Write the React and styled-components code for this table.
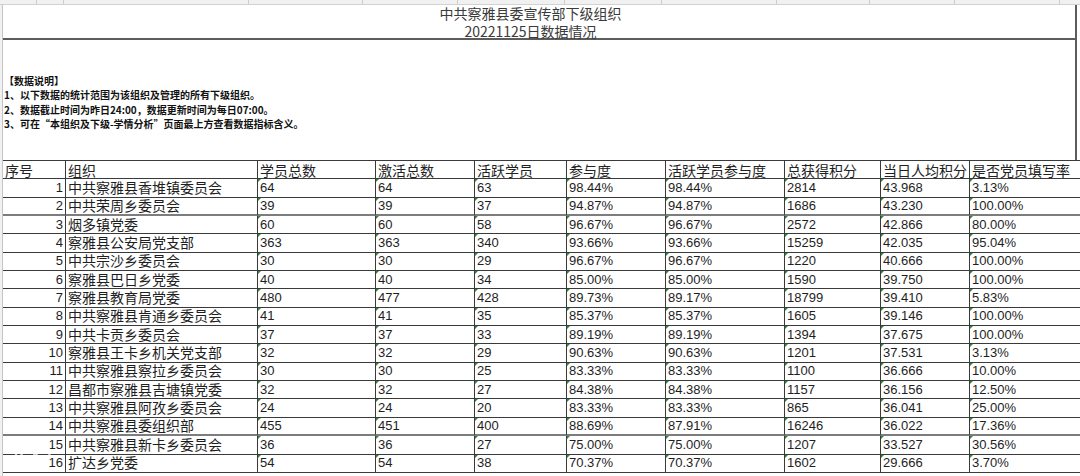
import React from "react";
import styled, { createGlobalStyle } from "styled-components";

const Global = createGlobalStyle`
  html, body { margin: 0; padding: 0; background: #fff; }
  body { font-family: "Liberation Sans", "Noto Sans CJK SC", sans-serif; }
`;

const COLS = [63, 192, 118, 99, 92, 99, 119, 96, 89, 130];
const STRIP = [37, 27, 185, 114, 95, 107, 97, 115, 93, 85, 105, 120];

const headers = ["序号", "组织", "学员总数", "激活总数", "活跃学员", "参与度", "活跃学员参与度", "总获得积分", "当日人均积分", "是否党员填写率"];

const rows = [
  ["中共察雅县香堆镇委员会", "64", "64", "63", "98.44%", "98.44%", "2814", "43.968", "3.13%"],
  ["中共荣周乡委员会", "39", "39", "37", "94.87%", "94.87%", "1686", "43.230", "100.00%"],
  ["烟多镇党委", "60", "60", "58", "96.67%", "96.67%", "2572", "42.866", "80.00%"],
  ["察雅县公安局党支部", "363", "363", "340", "93.66%", "93.66%", "15259", "42.035", "95.04%"],
  ["中共宗沙乡委员会", "30", "30", "29", "96.67%", "96.67%", "1220", "40.666", "100.00%"],
  ["察雅县巴日乡党委", "40", "40", "34", "85.00%", "85.00%", "1590", "39.750", "100.00%"],
  ["察雅县教育局党委", "480", "477", "428", "89.73%", "89.17%", "18799", "39.410", "5.83%"],
  ["中共察雅县肯通乡委员会", "41", "41", "35", "85.37%", "85.37%", "1605", "39.146", "100.00%"],
  ["中共卡贡乡委员会", "37", "37", "33", "89.19%", "89.19%", "1394", "37.675", "100.00%"],
  ["察雅县王卡乡机关党支部", "32", "32", "29", "90.63%", "90.63%", "1201", "37.531", "3.13%"],
  ["中共察雅县察拉乡委员会", "30", "30", "25", "83.33%", "83.33%", "1100", "36.666", "10.00%"],
  ["昌都市察雅县吉塘镇党委", "32", "32", "27", "84.38%", "84.38%", "1157", "36.156", "12.50%"],
  ["中共察雅县阿孜乡委员会", "24", "24", "20", "83.33%", "83.33%", "865", "36.041", "25.00%"],
  ["中共察雅县委组织部", "455", "451", "400", "88.69%", "87.91%", "16246", "36.022", "17.36%"],
  ["中共察雅县新卡乡委员会", "36", "36", "27", "75.00%", "75.00%", "1207", "33.527", "30.56%"],
  ["扩达乡党委", "54", "54", "38", "70.37%", "70.37%", "1602", "29.666", "3.70%"],
];

const Page = styled.div`
  position: relative;
  width: 1080px;
  height: 476px;
  overflow: hidden;
  background: #fff;
  display: flex;
  flex-direction: column;
`;

const TopStrip = styled.div`
  display: flex;
  height: 4px;
  flex: none;
  background: #f1f1f1;
  border-bottom: 1px solid #d2d2d2;
`;

const StripSeg = styled.div`
  flex: none;
  width: ${(p) => p.$w}px;
  height: 100%;
  border-right: 1px solid #cdcdcd;
  box-sizing: border-box;
`;

const Body = styled.div`
  display: flex;
  flex: 1;
  min-height: 0;
`;

const Gutter = styled.div`
  flex: none;
  width: 3px;
  box-sizing: border-box;
  background: #f1f1f1;
  border-right: 1px solid #c4c4c4;
`;

const Sheet = styled.div`
  flex: 1;
  min-width: 0;
  display: flex;
  flex-direction: column;
`;

const TitleBlock = styled.div`
  width: 1074px;
  height: 35px;
  box-sizing: border-box;
  padding: 0 17px 0 0;
  border-bottom: 2px solid #5c5c5c;
  border-right: 2px solid #5c5c5c;
  color: #3a3a3a;
  font-family: "Noto Sans CJK SC", sans-serif;
  font-size: 14px;
  text-align: center;
  flex: none;
  display: flex;
  flex-direction: column;
  gap: 1px;
`;

const TitleLine = styled.div`
  line-height: 17px;
`;

const Notes = styled.div`
  width: 1074px;
  height: 120px;
  box-sizing: border-box;
  padding: 34px 0 0 1px;
  border-right: 2px solid #5c5c5c;
  font-family: "Noto Sans CJK SC", sans-serif;
  font-size: 10px;
  font-weight: 700;
  line-height: 14.3px;
  color: #111;
  flex: none;
`;

const Table = styled.div`
  display: grid;
  grid-template-columns: ${COLS.map((c) => c + "px").join(" ")};
  grid-template-rows: repeat(17, 18.35px);
  border-top: 1px solid #3a3a3a;
  width: max-content;
`;

const Cell = styled.div`
  position: relative;
  box-sizing: border-box;
  border-right: 1px solid #3a3a3a;
  border-bottom: ${(p) => (p.$break ? "2px solid #7d7d7d" : "1px solid #3a3a3a")};
  padding: 0 2px;
  display: flex;
  align-items: center;
  justify-content: ${(p) => (p.$right ? "flex-end" : "flex-start")};
  white-space: nowrap;
  overflow: hidden;
  color: #1e1e1e;
  font-family: ${(p) => (p.$num ? '"Liberation Sans", sans-serif' : '"Liberation Sans", "Noto Sans CJK SC", sans-serif')};
  font-size: ${(p) => (p.$num ? "13px" : "14px")};
  line-height: 16px;
  &::before {
    content: "";
    display: ${(p) => (p.$marker ? "block" : "none")};
    position: absolute;
    left: 0;
    top: 0;
    border-top: 3px solid #2a8a3c;
    border-right: 3px solid transparent;
  }
`;

const HeadCell = styled(Cell)`
  font-family: "Noto Sans CJK SC", sans-serif;
  font-size: 14px;
  color: #222;
`;

const Watermark = styled.svg`
  position: absolute;
  left: 8px;
  top: 440px;
  opacity: 0.9;
  pointer-events: none;
`;

export default function App() {
  return (
    <>
      <Global />
      <Page>
        <TopStrip>
          {STRIP.map((w, i) => (
            <StripSeg key={i} $w={w} />
          ))}
        </TopStrip>
        <Body>
          <Gutter />
          <Sheet>
            <TitleBlock>
              <TitleLine>中共察雅县委宣传部下级组织</TitleLine>
              <TitleLine>20221125日数据情况</TitleLine>
            </TitleBlock>
            <Notes>
              <div>【数据说明】</div>
              <div>1、以下数据的统计范围为该组织及管理的所有下级组织。</div>
              <div>2、数据截止时间为昨日24:00，数据更新时间为每日07:00。</div>
              <div>3、可在“本组织及下级-学情分析”页面最上方查看数据指标含义。</div>
            </Notes>
            <Table>
              {headers.map((h) => (
                <HeadCell key={h}>{h}</HeadCell>
              ))}
              {rows.map((r, i) => {
                const brk = i === 1 || i === 13;
                return (
                  <React.Fragment key={i}>
                    <Cell $num $right $break={brk}>{i + 1}</Cell>
                    <Cell $break={brk}>{r[0]}</Cell>
                    {r.slice(1).map((v, j) => (
                      <Cell key={j} $num $marker $break={brk}>
                        {v}
                      </Cell>
                    ))}
                  </React.Fragment>
                );
              })}
            </Table>
          </Sheet>
        </Body>
        <Watermark width="50" height="26" viewBox="0 0 50 26">
          <g fill="none" stroke="rgba(255,255,255,0.85)" strokeWidth="2.2">
            <path d="M4 6 L8 3 L8 22" />
            <circle cx="20" cy="12" r="7" />
            <circle cx="35" cy="12" r="7" />
          </g>
        </Watermark>
      </Page>
    </>
  );
}
